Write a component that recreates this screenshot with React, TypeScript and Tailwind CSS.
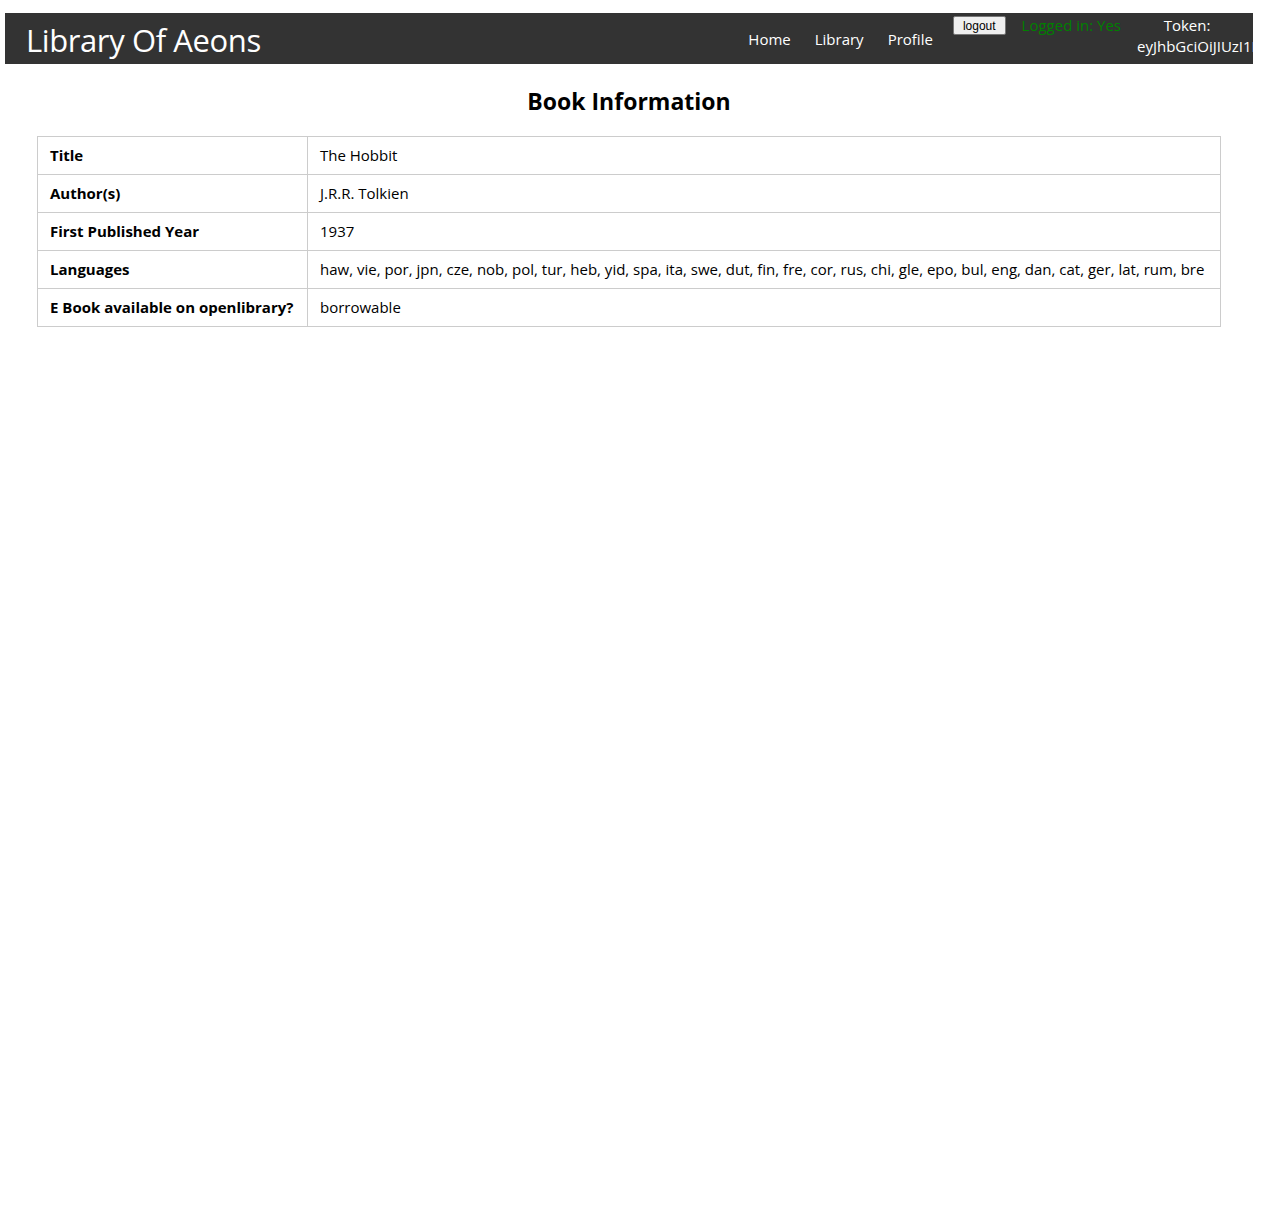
const rows: [string, string][] = [
  ["Title", "The Hobbit"],
  ["Author(s)", "J.R.R. Tolkien"],
  ["First Published Year", "1937"],
  [
    "Languages",
    "haw, vie, por, jpn, cze, nob, pol, tur, heb, yid, spa, ita, swe, dut, fin, fre, cor, rus, chi, gle, epo, bul, eng, dan, cat, ger, lat, rum, bre",
  ],
  ["E Book available on openlibrary?", "borrowable"],
];

const App = () => {
  return (
    <div className="min-h-[1208px] bg-white font-['Open_Sans',sans-serif] text-black">
      <div className="pt-[13px] pl-[5px] pr-[10px]">
        {/* top bar */}
        <nav className="flex h-[51px] items-center overflow-hidden bg-[#333333] text-white">
          <a className="ml-[21px] pt-[4px] text-[31px] leading-none tracking-[-0.4px]">Library Of Aeons</a>
          <div className="ml-auto flex items-center gap-[24px] pt-[2px] text-[15px]">
            <a>Home</a>
            <a>Library</a>
            <a>Profile</a>
          </div>
          <div className="ml-[20px] flex self-start pt-[3px]">
            <button className="h-[19px] rounded-[2px] border border-[#767676] bg-[#efefef] px-[9px] font-['Liberation_Sans',sans-serif] text-[12px] leading-none text-black">
              logout
            </button>
          </div>
          <div className="ml-[16px] self-start pt-[2px] text-[15px] leading-[20px] whitespace-nowrap text-[#008000]">
            Logged in: Yes
          </div>
          <div className="mr-[16px] ml-[16px] w-[100px] shrink-0 self-start pt-[2px] text-center text-[15px] leading-[21px] whitespace-nowrap">
            <div>Token:</div>
            <div>eyJhbGciOiJIUzI1NiIsInR5cCI6IkpXVCJ9</div>
          </div>
        </nav>

        {/* content */}
        <h2 className="mt-[23px] text-center text-[23px] leading-[28px] font-bold">Book Information</h2>
        <div className="mt-[21px] pl-[32px] pr-[32px]">
          <table className="w-full border-collapse text-[15px]">
            <tbody>
              {rows.map(([k, v]) => (
                <tr key={k} className="h-[38px]">
                  <td className="w-[270px] border border-[#cccccc] px-[12px] font-bold whitespace-nowrap">{k}</td>
                  <td className="border border-[#cccccc] px-[12px] whitespace-nowrap">{v}</td>
                </tr>
              ))}
            </tbody>
          </table>
        </div>
      </div>
    </div>
  );
};

export default App;
